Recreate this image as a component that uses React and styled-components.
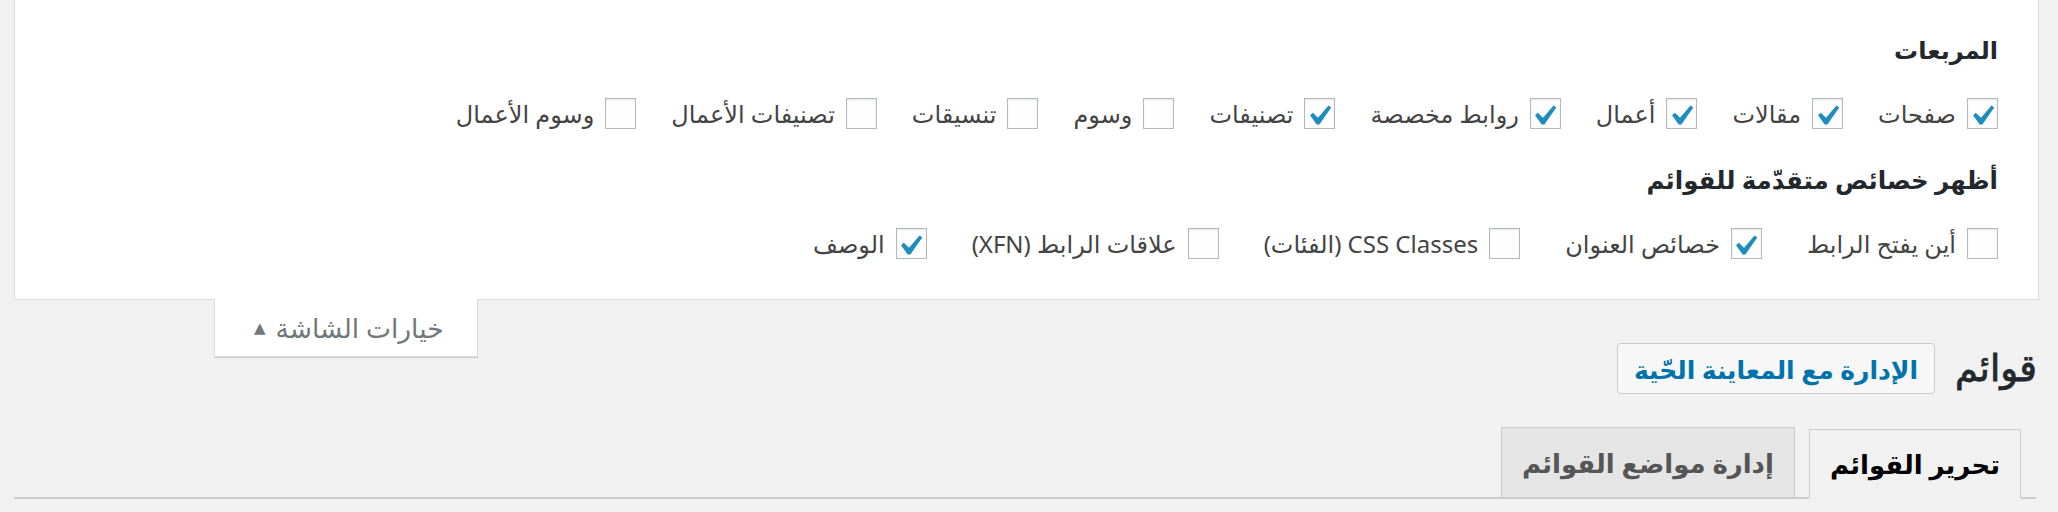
import React from 'react';
import styled, { createGlobalStyle } from 'styled-components';

const GlobalStyle = createGlobalStyle`
  html, body { margin: 0; padding: 0; background: #f1f1f1; }
  body { font-family: "Noto Sans", "DejaVu Sans", sans-serif; color: #444; }
  * { box-sizing: border-box; }
`;

const Page = styled.div`
  direction: rtl;
  width: 2058px;
  height: 512px;
  overflow: hidden;
  padding: 0 19px 0 14px;
`;

const Panel = styled.div`
  background: #fff;
  border: 1px solid #ddd;
  border-top: none;
  height: 300px;
  padding: 34px 40px 0 40px;
`;

const Legend = styled.h5`
  margin: ${(p) => (p.$first ? '0' : '35px')} 0 0 0;
  font-size: ${(p) => (p.$first ? '24px' : '24.5px')};
  line-height: 32px;
  font-weight: 700;
  color: #23282d;
`;

const Row = styled.div`
  display: flex;
  flex-wrap: wrap;
  column-gap: ${(p) => p.$gap || 30}px;
  margin-top: 32px;
`;

const Item = styled.label`
  display: flex;
  align-items: center;
  gap: 11px;
  height: 31px;
  font-size: 24px;
  color: #444;
  white-space: nowrap;
`;

const Box = styled.span`
  width: 31px;
  height: 31px;
  flex: none;
  border: 1px solid #b4b9be;
  background: #fefefe;
  box-shadow: inset 0 1px 2px rgba(0, 0, 0, 0.1);
  display: flex;
  align-items: center;
  justify-content: center;
  padding: 3px 0 0 1px;
`;

const Check = () => (
  <svg width="23" height="20" viewBox="5.4 4.6 11 9.8" aria-hidden="true">
    <path d="M14.83 4.89l1.34.94-5.81 8.38H9.02L5.78 9.67l1.34-1.25 2.57 2.4z" fill="#1e8cbe" />
  </svg>
);

const Option = ({ checked, children }) => (
  <Item>
    <Box>{checked && <Check />}</Box>
    <span>{children}</span>
  </Item>
);

const HeaderRow = styled.div`
  display: flex;
  justify-content: space-between;
  align-items: flex-start;
`;

const TitleGroup = styled.div`
  display: flex;
  align-items: center;
  gap: 20px;
  padding-top: 41px;
  margin-right: 2px;
`;

const Title = styled.h1`
  margin: 0;
  font-size: 37px;
  line-height: 51px;
  font-weight: 400;
  color: #23282d;
  -webkit-text-stroke: 0.8px #23282d;
  padding-bottom: 4px;
`;

const ActionButton = styled.a`
  display: inline-flex;
  align-items: center;
  height: 51px;
  padding: 0 16px;
  border: 1px solid #ccc;
  border-radius: 4px;
  background: #f7f7f7;
  color: #0073aa;
  font-size: 25px;
  font-weight: 700;
  text-decoration: none;
`;

const ScreenTab = styled.div`
  position: relative;
  margin-top: -1px;
  margin-left: 200px;
  height: 58px;
  padding: 0 33px 0 39px;
  display: flex;
  align-items: center;
  gap: 10px;
  background: #fff;
  border: 1px solid #ddd;
  border-top: none;
  box-shadow: 0 1px 0 #ccc;
  color: #72777c;
  font-size: 26.5px;
`;

const Arrow = styled.span`
  font-size: 15px;
  color: #72777c;
  line-height: 1;
`;

const TabBar = styled.div`
  display: flex;
  align-items: flex-end;
  gap: 14px;
  margin-top: 31px;
  margin-right: 3px;
  padding-right: 15px;
  border-bottom: 2px solid #ccc;
`;

const Tab = styled.div`
  height: 70px;
  margin-bottom: ${(p) => (p.$active ? '-2px' : '0')};
  padding: 0 20px;
  display: flex;
  align-items: center;
  border: 1px solid #ccc;
  border-bottom: ${(p) => (p.$active ? '2px solid #f1f1f1' : 'none')};
  background: ${(p) => (p.$active ? '#f1f1f1' : '#e5e5e5')};
  color: ${(p) => (p.$active ? '#000' : '#555')};
  font-size: 26px;
  font-weight: 700;
  white-space: nowrap;
`;

export default function App() {
  return (
    <>
      <GlobalStyle />
      <Page>
        <Panel>
          <Legend $first>المربعات</Legend>
          <Row $gap={35}>
            <Option checked>صفحات</Option>
            <Option checked>مقالات</Option>
            <Option checked>أعمال</Option>
            <Option checked>روابط مخصصة</Option>
            <Option checked>تصنيفات</Option>
            <Option>وسوم</Option>
            <Option>تنسيقات</Option>
            <Option>تصنيفات الأعمال</Option>
            <Option>وسوم الأعمال</Option>
          </Row>
          <Legend>أظهر خصائص متقدّمة للقوائم</Legend>
          <Row $gap={45}>
            <Option>أين يفتح الرابط</Option>
            <Option checked>خصائص العنوان</Option>
            <Option>CSS Classes (الفئات)</Option>
            <Option>علاقات الرابط (XFN)</Option>
            <Option checked>الوصف</Option>
          </Row>
        </Panel>
        <HeaderRow>
          <TitleGroup>
            <Title>قوائم</Title>
            <ActionButton href="#">الإدارة مع المعاينة الحّية</ActionButton>
          </TitleGroup>
          <ScreenTab>
            <span>خيارات الشاشة</span>
            <Arrow>▲</Arrow>
          </ScreenTab>
        </HeaderRow>
        <TabBar>
          <Tab $active>تحرير القوائم</Tab>
          <Tab>إدارة مواضع القوائم</Tab>
        </TabBar>
      </Page>
    </>
  );
}
